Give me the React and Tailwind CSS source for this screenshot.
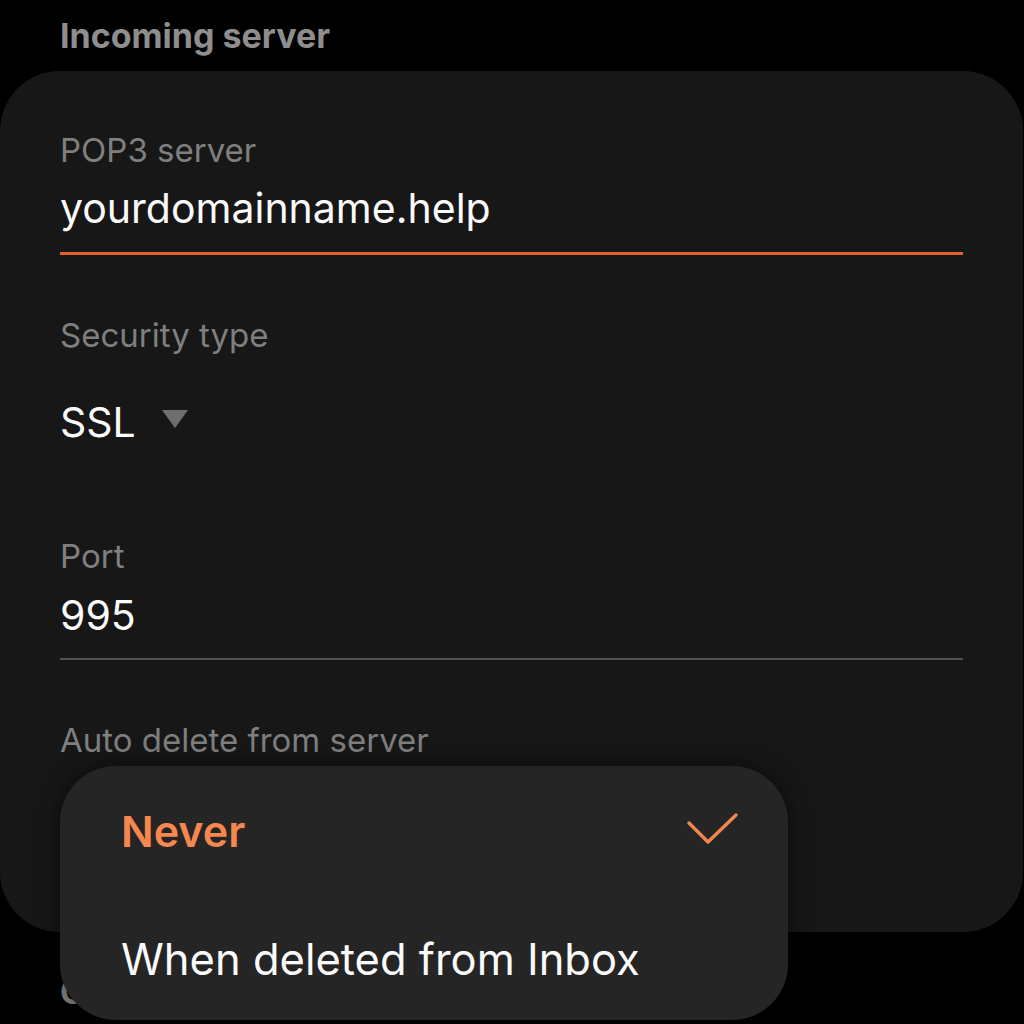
export default function App() {
  var font = { fontFamily: 'Inter, "Noto Sans", sans-serif' }
  return (
    <div className="relative w-[1024px] h-[1024px] overflow-hidden bg-black" style={font}>
      {/* Section heading */}
      <div className="pl-[60px] pt-[16px] text-[34px] leading-[40px] font-bold text-[#8e8e8e]">Incoming server</div>

      <div className="mt-[15px] mr-[1px] rounded-[60px] bg-[#171717] px-[60px] pt-[59px] pb-[172px]">
        <div className="text-[33px] leading-[40px] text-[#7f7f7f]">POP3 server</div>
        <div className="mt-[14px] text-[41px] leading-[48px] text-[#fafafa]">yourdomainname.help</div>
        <div className="mt-[20px] h-[3px] bg-[#e4602c]"></div>

        <div className="mt-[60px] text-[33px] leading-[40px] text-[#7f7f7f]">Security type</div>
        <div className="mt-[43px] flex items-start">
          <span className="text-[41px] leading-[48px] text-[#fafafa]">SSL</span>
          <svg className="ml-[26px] mt-[12px]" width="26" height="18" viewBox="0 0 26 18">
            <path d="M0 0 H26 L13 18 Z" fill="#6e6e6e" />
          </svg>
        </div>

        <div className="mt-[90px] text-[33px] leading-[40px] text-[#7f7f7f]">Port</div>
        <div className="mt-[15px] text-[41px] leading-[48px] text-[#fafafa]">995</div>
        <div className="mt-[19px] h-[2px] bg-[#505050]"></div>

        <div className="mt-[60px] text-[33px] leading-[40px] text-[#7f7f7f]">Auto delete from server</div>
      </div>

      {/* Next section, mostly hidden behind the menu */}
      <div className="pl-[60px] mt-[40px] text-[34px] leading-[40px] font-bold text-[#8e8e8e]">Outgoing server</div>

      {/* Dropdown menu */}
      <div className="absolute left-[60px] top-[766px] w-[728px] h-[254px] rounded-[56px] bg-[#252525] shadow-[0_0_24px_rgba(0,0,0,0.6)]">
        <div className="flex items-start justify-between pl-[61px] pr-[49px] pt-[35px]">
          <span className="text-[43px] leading-[60px] font-semibold text-[#f5874f]">Never</span>
          <svg className="mt-[11px]" width="53" height="33" viewBox="0 0 53 33">
            <path d="M3 11 L22 30 L50 3" fill="none" stroke="#f0854e" strokeWidth="3.5" strokeLinecap="round" strokeLinejoin="round" />
          </svg>
        </div>
        <div className="pl-[61px] mt-[68px] text-[43.5px] leading-[60px] text-[#fafafa]">When deleted from Inbox</div>
      </div>
    </div>
  )
}
